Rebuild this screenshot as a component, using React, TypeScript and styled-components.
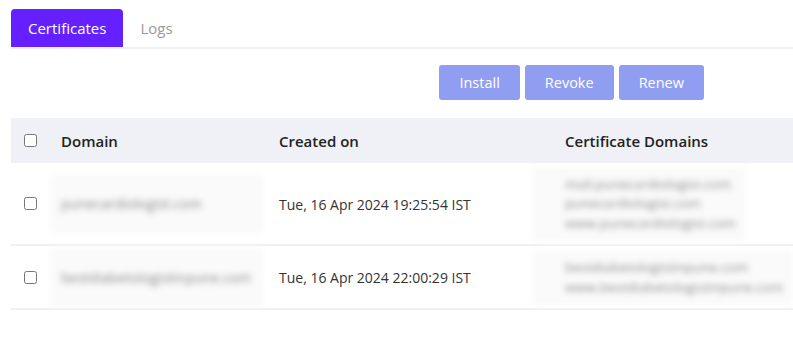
import styled, { createGlobalStyle } from "styled-components";

const GlobalStyle = createGlobalStyle`
  body {
    margin: 0;
    background: #fff;
    font-family: "Open Sans", "Liberation Sans", sans-serif;
  }
`;

type Cert = {
  domain: string;
  created: string;
  domains: string[];
};

const certs: Cert[] = [
  {
    domain: "punecardiologist.com",
    created: "Tue, 16 Apr 2024 19:25:54 IST",
    domains: ["mail.punecardiologist.com", "punecardiologist.com", "www.punecardiologist.com"],
  },
  {
    domain: "bestdiabetologistinpune.com",
    created: "Tue, 16 Apr 2024 22:00:29 IST",
    domains: ["bestdiabetologistinpune.com", "www.bestdiabetologistinpune.com"],
  },
];

export default function App() {
  return (
    <>
      <GlobalStyle />
      <Page>
        <Tabs>
          <Tab $active>Certificates</Tab>
          <Tab>Logs</Tab>
        </Tabs>

        <Actions>
          <Button>Install</Button>
          <Button>Revoke</Button>
          <Button>Renew</Button>
        </Actions>

        <Table>
          <HeadRow>
            <CheckCell>
              <Check type="checkbox" />
            </CheckCell>
            <HeadCell>Domain</HeadCell>
            <HeadCell>Created on</HeadCell>
            <HeadCell>Certificate Domains</HeadCell>
          </HeadRow>
          {certs.map((c) => (
            <Row key={c.domain} $height={c.domains.length > 2 ? 83 : 64}>
              <CheckCell>
                <Check type="checkbox" />
              </CheckCell>
              <Cell>
                <DomainPatch>{c.domain}</DomainPatch>
              </Cell>
              <Cell>{c.created}</Cell>
              <Cell>
                <ListPatch>
                  {c.domains.map((d) => (
                    <div key={d}>{d}</div>
                  ))}
                </ListPatch>
              </Cell>
            </Row>
          ))}
        </Table>
      </Page>
    </>
  );
}

const Page = styled.div`
  padding: 9px 0 0 11px;
`;

const Tabs = styled.div`
  display: flex;
  border-bottom: 2px solid #f0f0f2;
`;

const Tab = styled.div<{ $active?: boolean }>`
  height: 38px;
  padding: 0 17px;
  display: flex;
  align-items: center;
  font-size: 15px;
  border-radius: 4px 4px 0 0;
  color: ${(p) => (p.$active ? "#fff" : "#9a9a9a")};
  background: ${(p) => (p.$active ? "#6420ff" : "transparent")};
`;

const Actions = styled.div`
  display: flex;
  justify-content: flex-end;
  gap: 5px;
  padding: 16px 89px 0 0;
`;

const Button = styled.button`
  height: 35px;
  padding: 0 20px;
  border: none;
  border-radius: 3px;
  background: #8f9ef0;
  color: #fff;
  font-family: inherit;
  font-size: 14.5px;
`;

const Table = styled.div`
  margin-top: 18px;
`;

const grid = `
  display: grid;
  grid-template-columns: 39px 218px 286px 1fr;
  align-items: center;
`;

const HeadRow = styled.div`
  ${grid}
  height: 45px;
  background: #eff1f6;
`;

const Row = styled.div<{ $height: number }>`
  ${grid}
  box-sizing: border-box;
  height: ${(p) => p.$height}px;
  border-bottom: 2px solid #f0f0f2;
`;

const CheckCell = styled.div`
  padding-left: 13px;
  display: flex;
  align-items: center;
`;

const Check = styled.input`
  margin: 0;
  width: 13px;
  height: 13px;
`;

const HeadCell = styled.div`
  padding-left: 11px;
  font-size: 15px;
  font-weight: 600;
  color: #222;
`;

const Cell = styled.div`
  padding-left: 11px;
  padding-top: 1px;
  font-size: 14px;
  color: #333;
`;

const Patch = styled.div`
  background: #fafafa;
  color: #8a8a8a;
  font-size: 14px;
  line-height: 19.5px;
  filter: blur(3px);
`;

const DomainPatch = styled(Patch)`
  width: 213px;
  box-sizing: border-box;
  margin-left: -11px;
  padding: 20px 11px;
`;

const ListPatch = styled(Patch)`
  display: inline-block;
  margin-left: -32px;
  padding: 8px 10px 8px 32px;
  font-size: 13.5px;
`;
